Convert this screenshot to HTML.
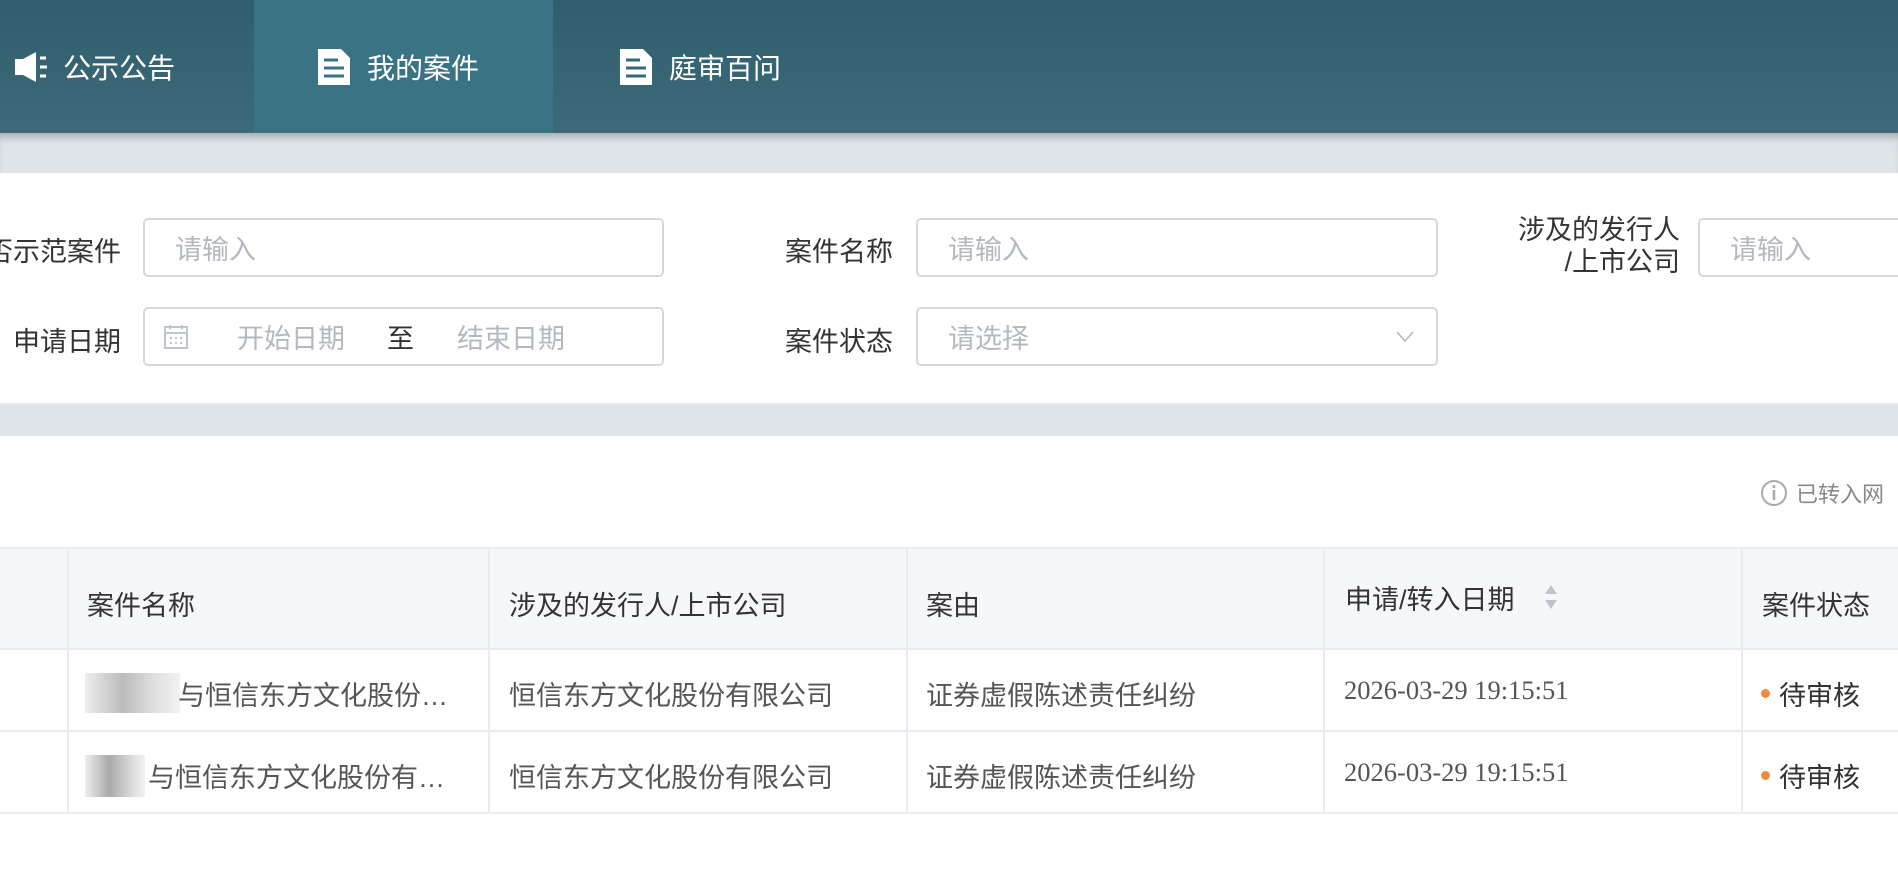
<!DOCTYPE html>
<html><head><meta charset="utf-8"><style>
*{margin:0;padding:0;box-sizing:border-box}
body{width:1898px;height:873px;overflow:hidden;background:#fff;font-family:"Liberation Sans","Noto Sans CJK SC",sans-serif;position:relative;color:#333}
.abs{position:absolute}
.nav{left:0;top:0;width:1898px;height:133px;background:linear-gradient(#2f5e6c,#3d6a79)}
.tab{top:0;height:133px;display:flex;align-items:center;color:#fff;font-size:28px}
.band{left:0;width:1898px;background:#dde5e8}
.lbl{font-size:27px;color:#333;text-align:right;white-space:nowrap}
.inp{border:2px solid #d6d8dc;border-radius:5px;height:59px;background:#fff;font-size:27px;color:#b4b8bf;display:flex;align-items:center;padding-left:30px}
.th{font-size:27px;color:#333;background:#f5f7fa}
.cell{position:absolute;font-size:27px;color:#555;white-space:nowrap}
.vl{position:absolute;width:2px;background:#e8ebef}
.hl{position:absolute;height:2px;background:#e8ebef;left:0;width:1898px}
</style></head><body>
<div class="abs nav"></div>
<div class="abs" style="left:254px;top:0;width:299px;height:133px;background:#3a7384"></div>
<div class="abs tab" style="left:14px">
<svg width="36" height="34" viewBox="0 0 36 34"><rect x="1" y="9" width="8" height="16" fill="#fff"/><path d="M9 9 L22 2 V32 L9 25Z" fill="#fff"/><path d="M26 8 h6 M26 17 h7 M26 26 h6" stroke="#fff" stroke-width="3"/></svg>
<span style="margin-left:13px">公示公告</span></div>
<div class="abs tab" style="left:317px">
<svg width="34" height="38" viewBox="0 0 34 38"><path d="M1 1 H24 L33 10 V37 H1Z" fill="#fff"/><path d="M7 12 h14 M7 20 h20 M7 28 h20" stroke="#3a7384" stroke-width="3"/></svg>
<span style="margin-left:16px">我的案件</span></div>
<div class="abs tab" style="left:619px">
<svg width="34" height="38" viewBox="0 0 34 38"><path d="M1 1 H24 L33 10 V37 H1Z" fill="#fff"/><path d="M7 12 h14 M7 20 h20 M7 28 h20" stroke="#34687a" stroke-width="3"/></svg>
<span style="margin-left:16px">庭审百问</span></div>
<div class="abs band" style="top:133px;height:40px;box-shadow:inset 0 8px 8px -4px rgba(0,0,0,.25)"></div>
<div class="abs lbl" style="right:1777px;top:230px">是否示范案件</div>
<div class="abs inp" style="left:143px;top:218px;width:521px">请输入</div>
<div class="abs lbl" style="right:1005px;top:230px">案件名称</div>
<div class="abs inp" style="left:916px;top:218px;width:522px">请输入</div>
<div class="abs lbl" style="right:218px;top:214px;line-height:32px">涉及的发行人<br>/上市公司</div>
<div class="abs inp" style="left:1698px;top:218px;width:240px">请输入</div>
<div class="abs lbl" style="right:1777px;top:320px">申请日期</div>
<div class="abs inp" style="left:143px;top:307px;width:521px;padding-left:18px">
<svg width="26" height="26" viewBox="0 0 26 26"><rect x="2" y="3" width="22" height="21" fill="none" stroke="#c0c4cc" stroke-width="2"/><path d="M2 9h22M7 1v4M19 1v4" stroke="#c0c4cc" stroke-width="2"/><path d="M7 14h2M12 14h2M17 14h2M7 19h2M12 19h2M17 19h2" stroke="#c0c4cc" stroke-width="2"/></svg>
<span style="margin-left:48px">开始日期</span><span style="margin-left:42px;color:#333">至</span><span style="margin-left:43px">结束日期</span></div>
<div class="abs lbl" style="right:1005px;top:320px">案件状态</div>
<div class="abs inp" style="left:916px;top:307px;width:522px">请选择
<svg class="abs" style="right:22px;top:22px" width="18" height="12" viewBox="0 0 18 12"><path d="M1 1 L9 10 L17 1" fill="none" stroke="#b4b8bf" stroke-width="1.6"/></svg></div>
<div class="abs band" style="top:403px;height:33px;border-top:2px solid #e6ecee"></div>
<div class="abs" style="left:1760px;top:477px;font-size:22px;color:#888;display:flex;align-items:center">
<svg width="28" height="28" viewBox="0 0 28 28"><circle cx="14" cy="14" r="12" fill="none" stroke="#aaa" stroke-width="2"/><path d="M14 11v10M14 6v3" stroke="#aaa" stroke-width="2.5"/></svg><span style="margin-left:8px">已转入网</span></div>
<div class="abs th" style="left:0;top:548px;width:1898px;height:101px"></div>
<div class="hl" style="top:547px"></div><div class="hl" style="top:648px"></div><div class="hl" style="top:730px"></div><div class="hl" style="top:812px"></div>
<div class="vl" style="left:67px;top:548px;height:265px"></div>
<div class="vl" style="left:488px;top:548px;height:265px"></div>
<div class="vl" style="left:906px;top:548px;height:265px"></div>
<div class="vl" style="left:1323px;top:548px;height:265px"></div>
<div class="vl" style="left:1741px;top:548px;height:265px"></div>
<div class="cell" style="left:87px;top:584px;color:#333">案件名称</div>
<div class="cell" style="left:509px;top:584px;color:#333">涉及的发行人/上市公司</div>
<div class="cell" style="left:926px;top:584px;color:#333">案由</div>
<div class="cell" style="left:1345px;top:578px;color:#333">申请/转入日期</div>
<svg class="abs" style="left:1544px;top:584px" width="14" height="26" viewBox="0 0 14 26"><path d="M7 1 L13 10 H1Z M7 25 L13 16 H1Z" fill="#c0c4cc"/></svg>
<div class="cell" style="left:1762px;top:584px;color:#333">案件状态</div>
<div class="abs" style="left:85px;top:673px;width:95px;height:40px;background:linear-gradient(90deg,#eee,#bbb 40%,#ddd 70%,#f3f3f3)"></div>
<div class="cell" style="left:178px;top:674px">与恒信东方文化股份…</div>
<div class="abs" style="left:85px;top:755px;width:60px;height:42px;background:linear-gradient(90deg,#eee,#aaa 40%,#ddd 80%,#f3f3f3)"></div>
<div class="cell" style="left:148px;top:756px">与恒信东方文化股份有…</div>
<div class="cell" style="left:509px;top:674px">恒信东方文化股份有限公司</div>
<div class="cell" style="left:509px;top:756px">恒信东方文化股份有限公司</div>
<div class="cell" style="left:926px;top:674px">证券虚假陈述责任纠纷</div>
<div class="cell" style="left:926px;top:756px">证券虚假陈述责任纠纷</div>
<div class="cell" style="left:1344px;top:675px;font-family:'Liberation Serif',serif;font-size:26.5px">2026-03-29 19:15:51</div>
<div class="cell" style="left:1344px;top:757px;font-family:'Liberation Serif',serif;font-size:26.5px">2026-03-29 19:15:51</div>
<div class="abs" style="left:1761px;top:689px;width:9px;height:9px;border-radius:50%;background:#f08a3c"></div>
<div class="cell" style="left:1779px;top:674px;color:#333">待审核</div>
<div class="abs" style="left:1761px;top:771px;width:9px;height:9px;border-radius:50%;background:#f08a3c"></div>
<div class="cell" style="left:1779px;top:756px;color:#333">待审核</div>
</body></html>
